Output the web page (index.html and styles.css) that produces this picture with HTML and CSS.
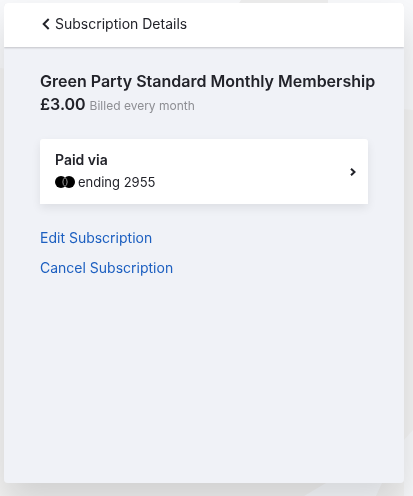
FILE: index.html
```
<!DOCTYPE html>
<html lang="en">
<head>
<meta charset="utf-8">
<meta name="viewport" content="width=device-width, initial-scale=1">
<title>Subscription Details</title>
<link rel="stylesheet" href="styles.css">
</head>
<body>
<svg class="backdrop" viewBox="0 0 413 496" preserveAspectRatio="none" aria-hidden="true">
  <path d="M0 68L413 110V430L404 440V496H0Z" fill="#f4f4f4"/>
  <path d="M241 0H328V8H236Z" fill="#eeeeee"/>
  <path d="M326 483H382L376 496H304Z" fill="#fafcff"/>
</svg>
<main class="panel">
  <header class="panel-header">
    <button class="back" type="button">
      <svg class="back-icon" viewBox="0 0 8 12" aria-hidden="true"><path d="M6.7 1L1.7 6L6.7 11"/></svg>
      Subscription Details
    </button>
  </header>
  <div class="content">
    <h1 class="plan">Green Party Standard Monthly Membership</h1>
    <p class="price"><strong class="amount">£3.00</strong> <span class="period">Billed every month</span></p>
    <button class="payment" type="button">
      <span class="payment-text">
        <span class="payment-title">Paid via</span>
        <span class="payment-method">
          <svg class="card-icon" viewBox="0 0 20 12" role="img" aria-label="Mastercard">
            <circle cx="6" cy="6" r="6"/>
            <circle cx="14" cy="6" r="6"/>
            <path d="M10 1.4A6 6 0 0 1 10 10.6A6 6 0 0 1 10 1.4Z"/>
          </svg>
          ending 2955
        </span>
      </span>
      <svg class="next-icon" viewBox="0 0 6 8" aria-hidden="true"><path d="M1 .7L4.5 4L1 7.3"/></svg>
    </button>
    <nav class="actions" aria-label="Subscription actions">
      <a class="action" href="#edit">Edit Subscription</a>
      <a class="action" href="#cancel">Cancel Subscription</a>
    </nav>
  </div>
</main>
</body>
</html>
```
FILE: styles.css
```
* {
  box-sizing: border-box;
}

body {
  display: flex;
  min-height: 100vh;
  margin: 0;
  padding: 3px 9px 13px 4px;
  overflow: hidden;
  background: #f8f9fb;
  color: #22232a;
  font-family: Inter, "Liberation Sans", sans-serif;
  font-size: 14px;
  line-height: 20px;
}

.backdrop {
  position: fixed;
  inset: 0;
  z-index: -1;
  width: 100%;
  height: 100%;
}

.panel {
  flex: 1;
  overflow: hidden;
  border-radius: 4px;
  background: #f0f2f7;
  box-shadow: 0 20px 36px rgba(0, 0, 0, 0.15);
}

.panel-header {
  display: flex;
  align-items: center;
  height: 44px;
  padding: 0 36px 2px;
  background: #fff;
  box-shadow: 0 1px 2px rgba(0, 0, 0, 0.2);
}

button {
  border: 0;
  color: inherit;
  font: inherit;
  text-align: left;
  cursor: pointer;
}

.back {
  display: flex;
  align-items: center;
  gap: 5px;
  padding: 0 2px;
  background: none;
}

.back-icon {
  width: 8px;
  height: 12px;
  fill: none;
  stroke: #22232a;
  stroke-width: 2;
}

.content {
  padding: 23px 36px;
}

.plan,
.price {
  margin: 0;
  line-height: 23px;
}

.plan,
.amount {
  font-size: 16px;
  font-weight: 600;
  white-space: nowrap;
}

.period {
  color: #8d8e93;
  font-size: 12px;
}

.payment {
  display: flex;
  align-items: center;
  justify-content: space-between;
  width: 100%;
  height: 65px;
  margin: 22px 0 24px;
  padding: 0 12px 0 15px;
  border-radius: 3px 3px 0 0;
  background: #fff;
  box-shadow: 0 4px 10px rgba(0, 0, 0, 0.08);
}

.payment-text {
  display: flex;
  flex-direction: column;
  gap: 2px;
  padding-bottom: 2px;
}

.payment-title {
  font-weight: 600;
}

.payment-method {
  display: flex;
  align-items: center;
  gap: 3px;
  font-size: 13px;
}

.card-icon {
  width: 20px;
  height: 12px;
}

.card-icon path {
  fill: #000;
  stroke: #999;
  stroke-width: 1;
}

.next-icon {
  width: 6px;
  height: 8px;
  fill: none;
  stroke: #22232a;
  stroke-width: 2;
}

.actions {
  display: flex;
  flex-direction: column;
  align-items: flex-start;
  gap: 10px;
}

.action {
  color: #1c5fc0;
  text-decoration: none;
}
```
